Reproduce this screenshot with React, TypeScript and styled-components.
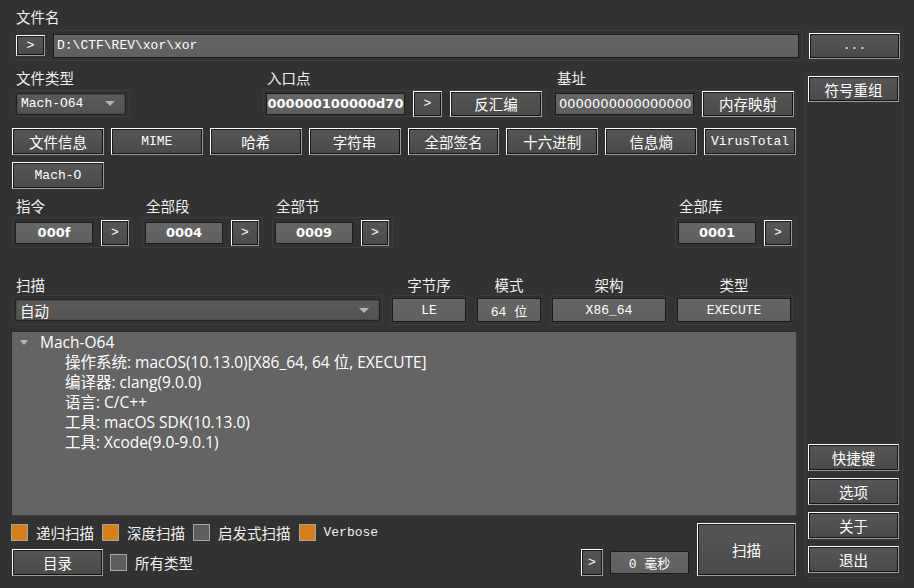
import React from "react";
import styled, { createGlobalStyle } from "styled-components";

const CJK = `"Noto Sans CJK SC", sans-serif`;
const MONO = `"Liberation Mono", "Noto Sans CJK SC", monospace`;
const NUM = `"DejaVu Sans", "Noto Sans CJK SC", sans-serif`;
const TREE = `"Open Sans", "Noto Sans CJK SC", sans-serif`;

const Global = createGlobalStyle`
  html, body { margin: 0; padding: 0; background: #323232; }
  * { box-sizing: border-box; }
`;

const Page = styled.div`
  width: 914px;
  height: 588px;
  overflow: hidden;
  background: #323232;
  color: #fff;
  padding: 8px 11px 12px 12px;
  display: flex;
  flex-direction: column;
  font-family: ${CJK};
`;

const Label = styled.div<{ $center?: boolean }>`
  font-size: 14.5px;
  line-height: 18px;
  height: 18px;
  flex: none;
  color: #f0f0f0;
  padding-left: ${(p) => (p.$center ? 0 : 4)}px;
  text-align: ${(p) => (p.$center ? "center" : "left")};
  white-space: nowrap;
`;

const Row = styled.div<{ $gap?: number; $mt?: number }>`
  display: flex;
  flex: none;
  gap: ${(p) => p.$gap ?? 0}px;
  margin-top: ${(p) => p.$mt ?? 0}px;
`;

const Frame = styled.div<{ $w?: number; $h: number; $gap?: number; $pad?: number; $mt?: number }>`
  display: flex;
  align-items: center;
  flex: none;
  gap: ${(p) => p.$gap ?? 0}px;
  width: ${(p) => (p.$w ? `${p.$w}px` : "auto")};
  height: ${(p) => p.$h}px;
  margin-top: ${(p) => p.$mt ?? 0}px;
  border: 1px solid #3c3c3c;
  border-radius: 3px;
  padding: 0 ${(p) => p.$pad ?? 2}px;
`;

const Btn = styled.button<{ $mono?: boolean; $w?: number; $h?: number }>`
  width: ${(p) => (p.$w ? `${p.$w}px` : "100%")};
  height: ${(p) => p.$h ?? 27}px;
  flex: none;
  margin: 0;
  padding: 0;
  background: linear-gradient(#565656, #4a4a4a);
  color: #fff;
  border: 1px solid;
  border-color: #ffffff #9a9a9a #9a9a9a #ffffff;
  box-shadow: inset -1px -1px 0 #141414, inset 1px 1px 0 #1a1a1a;
  font-family: ${(p) => (p.$mono ? MONO : CJK)};
  font-size: ${(p) => (p.$mono ? 13 : 14.5)}px;
  display: flex;
  align-items: center;
  justify-content: center;
  white-space: nowrap;
  cursor: default;
`;

const Field = styled.div<{ $w?: number; $h?: number; $font?: string; $bold?: boolean; $left?: boolean; $fs?: number }>`
  width: ${(p) => (p.$w ? `${p.$w}px` : "auto")};
  flex: ${(p) => (p.$w ? "none" : "1")};
  height: ${(p) => p.$h ?? 23}px;
  background: linear-gradient(#666666, #5f5f5f);
  border: 1px solid #1c1c1c;
  color: #fff;
  font-family: ${(p) => p.$font ?? MONO};
  font-weight: ${(p) => (p.$bold ? 700 : 400)};
  font-size: ${(p) => p.$fs ?? 13}px;
  display: flex;
  align-items: center;
  justify-content: ${(p) => (p.$left ? "flex-start" : "center")};
  padding: 0 ${(p) => (p.$left ? 3 : 0)}px;
  white-space: nowrap;
  overflow: hidden;
`;

const Combo = styled.div<{ $font: string; $fs: number }>`
  flex: 1;
  height: 22px;
  background: linear-gradient(#5a5a5a, #525252);
  border: 1px solid #232323;
  border-radius: 2px;
  box-shadow: inset 0 0 0 1px #4a4a4a;
  display: flex;
  align-items: center;
  padding: 0 10px 0 4px;
  font-family: ${(p) => p.$font};
  font-size: ${(p) => p.$fs}px;
  color: #fff;
`;

const ComboText = styled.span`
  flex: 1;
`;

const Caret = styled.span`
  width: 0;
  height: 0;
  border-left: 5px solid transparent;
  border-right: 5px solid transparent;
  border-top: 5px solid #b4b4b4;
`;

const Body = styled.div`
  flex: 1;
  display: flex;
  gap: 9px;
  margin-top: 8px;
  min-height: 0;
`;

const Main = styled.div`
  width: 784px;
  display: flex;
  flex-direction: column;
`;

const Side = styled.div`
  width: 98px;
  margin: 4px 0 -2px 0;
  border: 1px solid #3c3c3c;
  border-radius: 3px;
  padding: 2px 3px 4px 2px;
  display: flex;
  flex-direction: column;
  gap: 7px;
`;

const Spacer = styled.div`
  flex: 1;
`;

const Group = styled.div<{ $w: number }>`
  width: ${(p) => p.$w}px;
  flex: none;
  display: flex;
  flex-direction: column;
`;

const ButtonGrid = styled.div`
  display: grid;
  grid-template-columns: repeat(8, 1fr);
  column-gap: 7px;
  row-gap: 7px;
  margin-top: 11px;
  flex: none;
`;

const TreePanel = styled.div`
  flex: 1;
  margin: 6px -1px 0 -1px;
  background: #646464;
  border: 1px solid #2b2b2b;
  border-right-color: #3a3a3a;
  border-bottom-color: #3a3a3a;
  padding: 0 0 0 8px;
  font-family: ${TREE};
  font-size: 15.5px;
  line-height: 20px;
  color: #fff;
`;

const TreeHead = styled.div`
  display: flex;
  align-items: center;
  gap: 12px;
`;

const TreeArrow = styled.span`
  width: 0;
  height: 0;
  border-left: 4px solid transparent;
  border-right: 4px solid transparent;
  border-top: 5px solid #b8b8b8;
`;

const TreeItem = styled.div`
  padding-left: 45px;
  white-space: nowrap;
`;

const Bottom = styled.div`
  display: flex;
  flex: none;
  gap: 8px;
  margin-top: 7px;
  align-items: flex-end;
`;

const BottomLeft = styled.div`
  flex: 1;
  display: flex;
  flex-direction: column;
`;

const CheckRow = styled.div`
  display: flex;
  align-items: center;
  height: 17px;
  margin-left: -1px;
`;

const Check = styled.span<{ $on?: boolean }>`
  width: 17px;
  height: 17px;
  flex: none;
  background: ${(p) => (p.$on ? "#d6801c" : "#5e5e5e")};
  border: 1px solid #a6a6a6;
`;

const CheckText = styled.span<{ $mono?: boolean }>`
  margin: 0 8px 0 8px;
  font-family: ${(p) => (p.$mono ? MONO : CJK)};
  font-size: ${(p) => (p.$mono ? 13 : 14.5)}px;
  color: #f0f0f0;
  white-space: nowrap;
`;

const BottomRow = styled.div`
  display: flex;
  align-items: center;
  margin-top: 8px;
  height: 27px;
`;

const Gap = styled.div<{ $w: number }>`
  width: ${(p) => p.$w}px;
  flex: none;
`;

const tree = [
  "操作系统: macOS(10.13.0)[X86_64, 64 位, EXECUTE]",
  "编译器: clang(9.0.0)",
  "语言: C/C++",
  "工具: macOS SDK(10.13.0)",
  "工具: Xcode(9.0-9.0.1)",
];

const tabs: { t: string; mono?: boolean }[] = [
  { t: "文件信息" },
  { t: "MIME", mono: true },
  { t: "哈希" },
  { t: "字符串" },
  { t: "全部签名" },
  { t: "十六进制" },
  { t: "信息熵" },
  { t: "VirusTotal", mono: true },
];

const counters = [
  { label: "指令", v: "000f" },
  { label: "全部段", v: "0004" },
  { label: "全部节", v: "0009" },
];

function Counter({ label, v }: { label: string; v: string }) {
  return (
    <Group $w={121}>
      <Label>{label}</Label>
      <Frame $h={31} $gap={8} $pad={2} $mt={2}>
        <Field $w={78} $h={22} $font={NUM} $bold $fs={13}>
          {v}
        </Field>
        <Btn $mono $w={28} $h={26}>
          &gt;
        </Btn>
      </Frame>
    </Group>
  );
}

function Info({ label, w, value }: { label: string; w: number; value: string }) {
  return (
    <Group $w={w}>
      <Label $center>{label}</Label>
      <Frame $h={30} $pad={1} $mt={1}>
        <Field $h={24}>{value}</Field>
      </Frame>
    </Group>
  );
}

export default function App() {
  return (
    <Page>
      <Global />
      <Label>文件名</Label>
      <Row $gap={3} $mt={4}>
        <Frame $w={791} $h={31} $gap={8} $pad={3}>
          <Btn $mono $w={29} $h={21}>
            &gt;
          </Btn>
          <Field $left $h={24} $fs={13}>
            D:\CTF\REV\xor\xor
          </Field>
        </Frame>
        <Frame $w={97} $h={31} $pad={2}>
          <Btn $mono $h={26}>
            ...
          </Btn>
        </Frame>
      </Row>
      <Body>
        <Main>
          <Row>
            <Group $w={118}>
              <Label>文件类型</Label>
              <Frame $h={27} $pad={3} $mt={3}>
                <Combo $font={MONO} $fs={13}>
                  <ComboText>Mach-O64</ComboText>
                  <Caret />
                </Combo>
              </Frame>
            </Group>
            <Spacer />
            <Group $w={283}>
              <Label>入口点</Label>
              <Frame $h={27} $gap={8} $pad={2} $mt={3}>
                <Field $w={139} $h={22} $font={NUM} $bold $fs={13}>
                  000000100000d70
                </Field>
                <Btn $mono $w={29} $h={26}>
                  &gt;
                </Btn>
                <Btn $w={92} $h={26}>
                  反汇编
                </Btn>
              </Frame>
            </Group>
            <Gap $w={7} />
            <Group $w={243}>
              <Label>基址</Label>
              <Frame $h={27} $gap={8} $pad={1} $mt={3}>
                <Field $w={139} $h={22} $font={NUM} $fs={13} $left>
                  0000000000000000
                </Field>
                <Btn $w={92} $h={26}>
                  内存映射
                </Btn>
              </Frame>
            </Group>
          </Row>

          <ButtonGrid>
            {tabs.map((b) => (
              <Btn key={b.t} $mono={b.mono} $h={27}>
                {b.t}
              </Btn>
            ))}
            <Btn $mono $h={27}>
              Mach-O
            </Btn>
          </ButtonGrid>

          <Row $gap={9} $mt={8}>
            {counters.map((c) => (
              <Counter key={c.label} label={c.label} v={c.v} />
            ))}
            <Spacer />
            <Counter label="全部库" v="0001" />
          </Row>

          <Row $gap={7} $mt={28}>
            <Group $w={371}>
              <Label>扫描</Label>
              <Frame $h={30} $pad={2} $mt={1}>
                <Combo $font={CJK} $fs={14.5}>
                  <ComboText>自动</ComboText>
                  <Caret />
                </Combo>
              </Frame>
            </Group>
            <Info label="字节序" w={78} value="LE" />
            <Info label="模式" w={68} value="64 位" />
            <Info label="架构" w={118} value="X86_64" />
            <Info label="类型" w={118} value="EXECUTE" />
          </Row>

          <TreePanel>
            <TreeHead>
              <TreeArrow />
              <span>Mach-O64</span>
            </TreeHead>
            {tree.map((t) => (
              <TreeItem key={t}>{t}</TreeItem>
            ))}
          </TreePanel>

          <Bottom>
            <BottomLeft>
              <CheckRow>
                <Check $on />
                <CheckText>递归扫描</CheckText>
                <Check $on />
                <CheckText>深度扫描</CheckText>
                <Check />
                <CheckText>启发式扫描</CheckText>
                <Check $on />
                <CheckText $mono>Verbose</CheckText>
              </CheckRow>
              <BottomRow>
                <Btn $w={91} $h={27}>
                  目录
                </Btn>
                <Gap $w={7} />
                <Check />
                <CheckText>所有类型</CheckText>
                <Spacer />
                <Btn $mono $w={22} $h={27}>
                  &gt;
                </Btn>
                <Gap $w={7} />
                <Field $w={79} $h={23}>
                  0 毫秒
                </Field>
              </BottomRow>
            </BottomLeft>
            <Btn $w={99} $h={53}>
              扫描
            </Btn>
          </Bottom>
        </Main>
        <Side>
          <Btn $h={26}>符号重组</Btn>
          <Spacer />
          <Btn>快捷键</Btn>
          <Btn>选项</Btn>
          <Btn>关于</Btn>
          <Btn>退出</Btn>
        </Side>
      </Body>
    </Page>
  );
}
